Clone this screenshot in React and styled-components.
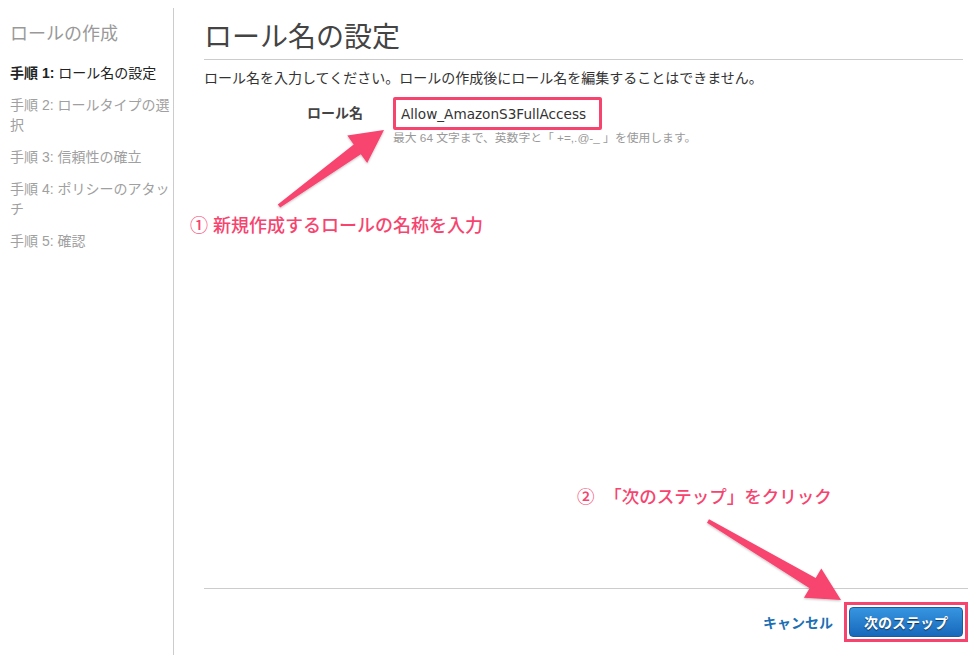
import styled, { createGlobalStyle } from "styled-components";

const PINK = "#f7446f";

const GlobalStyle = createGlobalStyle`
  html, body {
    margin: 0;
    padding: 0;
    background: #fff;
  }
  body {
    font-family: "Liberation Sans", "Noto Sans CJK JP", sans-serif;
    color: #333;
  }
`;

const steps = [
  { no: 1, label: "ロール名の設定", active: true },
  { no: 2, label: "ロールタイプの選択" },
  { no: 3, label: "信頼性の確立" },
  { no: 4, label: "ポリシーのアタッチ" },
  { no: 5, label: "確認" },
];

function arrowPoints(x1, y1, x2, y2, tail = 2, neck = 6, head = 17, headLen = 33) {
  const dx = x2 - x1;
  const dy = y2 - y1;
  const len = Math.hypot(dx, dy);
  const ux = dx / len;
  const uy = dy / len;
  const px = -uy;
  const py = ux;
  const pt = (a, b) => `${(x1 + ux * a + px * b).toFixed(1)},${(y1 + uy * a + py * b).toFixed(1)}`;
  return [
    pt(0, -tail),
    pt(len - headLen, -neck),
    pt(len - headLen, -head),
    pt(len, 0),
    pt(len - headLen, head),
    pt(len - headLen, neck),
    pt(0, tail),
  ].join(" ");
}

export default function App() {
  return (
    <Page>
      <GlobalStyle />
      <Sidebar>
        <SideTitle>ロールの作成</SideTitle>
        {steps.map((s) => (
          <Step key={s.no} $active={s.active}>
            <b>手順 {s.no}:</b> {s.label}
          </Step>
        ))}
      </Sidebar>

      <Main>
        <Heading>ロール名の設定</Heading>
        <Description>
          ロール名を入力してください。ロールの作成後にロール名を編集することはできません。
        </Description>
        <FormRow>
          <Label>ロール名</Label>
          <Field>
            <NameInput value="Allow_AmazonS3FullAccess" readOnly />
            <Hint>最大 64 文字まで、英数字と「 +=,.@-_ 」を使用します。</Hint>
          </Field>
        </FormRow>
        <Spacer />
        <Footer>
          <CancelLink>キャンセル</CancelLink>
          <Highlight>
            <NextButton>次のステップ</NextButton>
          </Highlight>
        </Footer>
      </Main>

      <Note style={{ left: 190, top: 214 }}>① 新規作成するロールの名称を入力</Note>
      <Note style={{ left: 577, top: 485 }} $small>②&nbsp;&nbsp;「次のステップ」をクリック</Note>

      <Overlay width="977" height="655" viewBox="0 0 977 655">
        <defs>
          <filter id="shadow" x="-20%" y="-20%" width="140%" height="140%">
            <feDropShadow dx="0" dy="1" stdDeviation="1" floodColor="#000" floodOpacity="0.25" />
          </filter>
        </defs>
        <polygon points={arrowPoints(279, 206, 384, 130)} fill={PINK} filter="url(#shadow)" />
        <polygon points={arrowPoints(708, 521, 841, 600)} fill={PINK} filter="url(#shadow)" />
      </Overlay>
    </Page>
  );
}

const Page = styled.div`
  position: relative;
  display: flex;
  width: 977px;
  height: 655px;
  overflow: hidden;
`;

const Sidebar = styled.aside`
  width: 161px;
  flex-shrink: 0;
  margin-top: 8px;
  padding: 14px 2px 0 10px;
  border-right: 1px solid #ccc;
`;

const SideTitle = styled.div`
  font-size: 18px;
  line-height: 24px;
  color: #999;
  margin-bottom: 17px;
`;

const Step = styled.div`
  font-size: 14px;
  line-height: 20px;
  margin-bottom: 12px;
  color: ${(p) => (p.$active ? "#222" : "#a0a0a0")};
  b {
    font-weight: ${(p) => (p.$active ? 700 : 400)};
  }
`;

const Main = styled.main`
  flex: 1;
  display: flex;
  flex-direction: column;
  padding: 0 14px 0 30px;
`;

const Heading = styled.h1`
  margin: 0;
  padding: 18px 0 1px;
  font-size: 28px;
  line-height: 40px;
  font-weight: 400;
  color: #444;
  border-bottom: 1px solid #ccc;
`;

const Description = styled.p`
  margin: 8px 0 0;
  font-size: 14px;
  line-height: 20px;
  color: #333;
`;

const FormRow = styled.div`
  display: grid;
  grid-template-columns: 159px 1fr;
  column-gap: 30px;
  margin-top: 9px;
`;

const Label = styled.div`
  text-align: right;
  font-size: 14px;
  font-weight: 700;
  color: #444;
  line-height: 33px;
`;

const Field = styled.div`
  display: flex;
  flex-direction: column;
  align-items: flex-start;
`;

const NameInput = styled.input`
  box-sizing: border-box;
  width: 209px;
  height: 33px;
  padding: 0 5px;
  border: 3px solid ${PINK};
  border-radius: 2px;
  font-family: "DejaVu Sans", sans-serif;
  font-size: 13.6px;
  color: #333;
  background: #fff;
  outline: none;
`;

const Hint = styled.div`
  margin-top: 1px;
  font-size: 11.8px;
  line-height: 14px;
  color: #999;
`;

const Spacer = styled.div`
  flex: 1;
`;

const Footer = styled.div`
  display: flex;
  justify-content: flex-end;
  align-items: center;
  gap: 11px;
  padding: 13px 0 13px;
  margin-right: -5px;
  border-top: 1px solid #ccc;
`;

const CancelLink = styled.a`
  font-size: 14px;
  font-weight: 700;
  color: #1d6fb3;
  cursor: pointer;
`;

const Highlight = styled.span`
  display: flex;
  padding: 2px;
  border: 3px solid ${PINK};
`;

const NextButton = styled.button`
  box-sizing: border-box;
  width: 114px;
  height: 30px;
  border: 1px solid #1a5c9c;
  border-radius: 4px;
  background: linear-gradient(#3695e0, #1868bb);
  color: #fff;
  font-family: "Liberation Sans", "Noto Sans CJK JP", sans-serif;
  font-size: 14px;
  font-weight: 700;
  text-shadow: 0 1px 1px rgba(0, 0, 0, 0.6);
  cursor: pointer;
`;

const Note = styled.div`
  position: absolute;
  font-size: ${(p) => (p.$small ? "17.5px" : "18px")};
  line-height: 24px;
  font-weight: 500;
  color: ${PINK};
  white-space: nowrap;
`;

const Overlay = styled.svg`
  position: absolute;
  left: 0;
  top: 0;
  pointer-events: none;
`;
